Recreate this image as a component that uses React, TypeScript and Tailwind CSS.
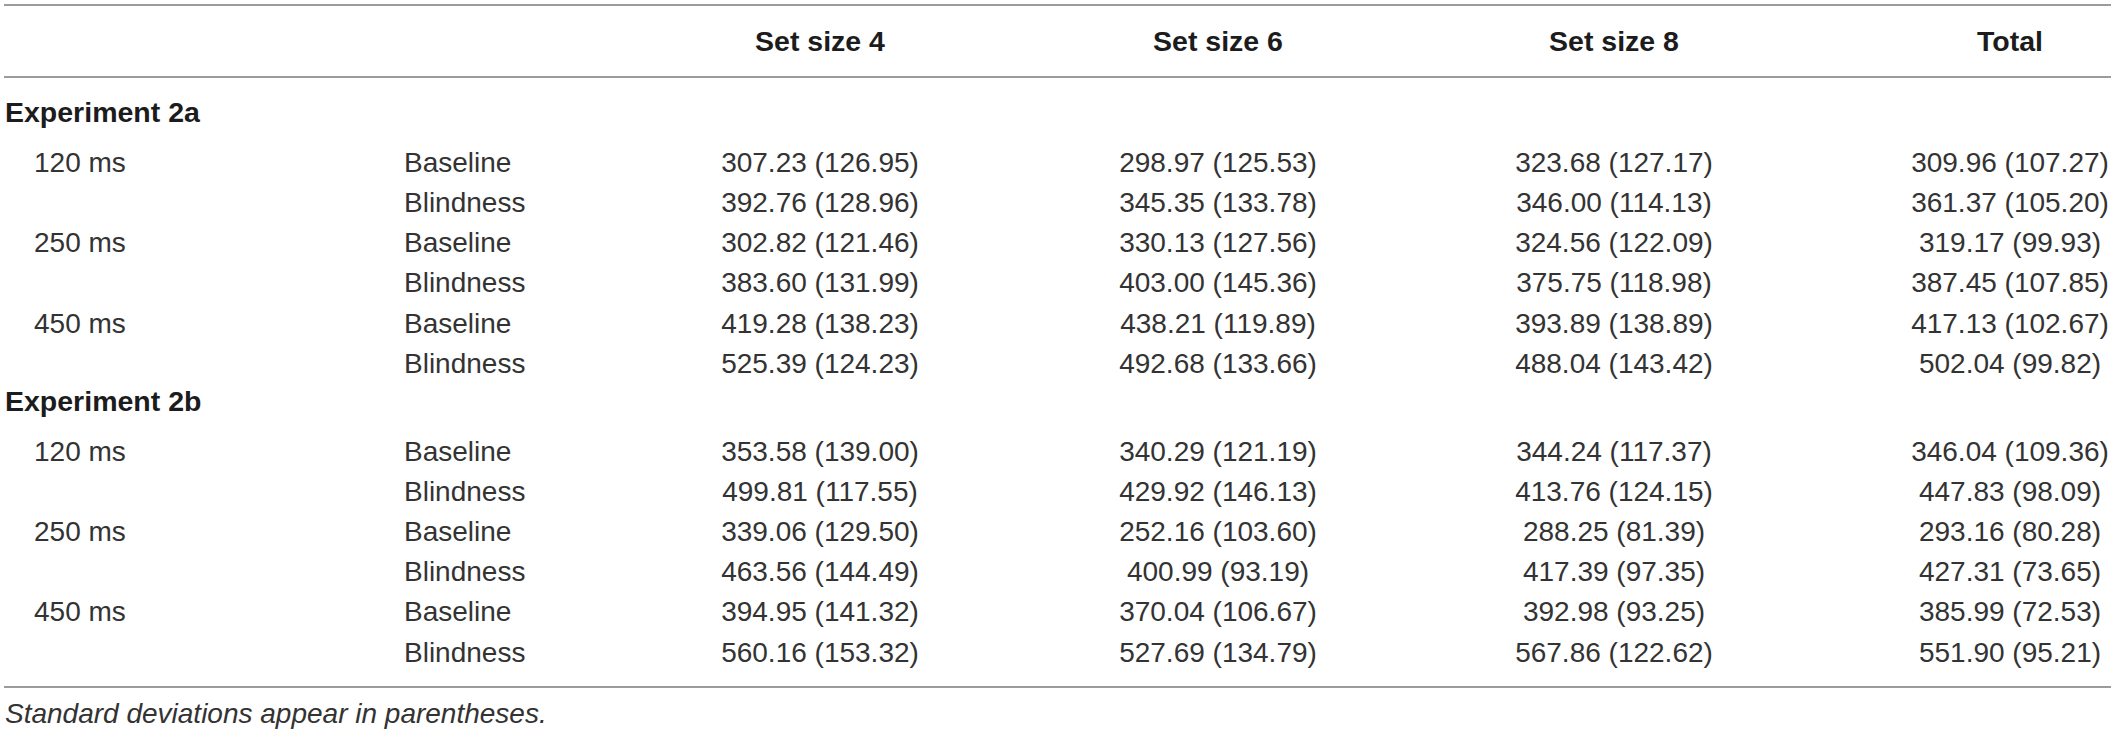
const groups = [
  {
    name: "Experiment 2a",
    rows: [
      ["120 ms", "Baseline", "307.23 (126.95)", "298.97 (125.53)", "323.68 (127.17)", "309.96 (107.27)"],
      ["", "Blindness", "392.76 (128.96)", "345.35 (133.78)", "346.00 (114.13)", "361.37 (105.20)"],
      ["250 ms", "Baseline", "302.82 (121.46)", "330.13 (127.56)", "324.56 (122.09)", "319.17 (99.93)"],
      ["", "Blindness", "383.60 (131.99)", "403.00 (145.36)", "375.75 (118.98)", "387.45 (107.85)"],
      ["450 ms", "Baseline", "419.28 (138.23)", "438.21 (119.89)", "393.89 (138.89)", "417.13 (102.67)"],
      ["", "Blindness", "525.39 (124.23)", "492.68 (133.66)", "488.04 (143.42)", "502.04 (99.82)"],
    ],
  },
  {
    name: "Experiment 2b",
    rows: [
      ["120 ms", "Baseline", "353.58 (139.00)", "340.29 (121.19)", "344.24 (117.37)", "346.04 (109.36)"],
      ["", "Blindness", "499.81 (117.55)", "429.92 (146.13)", "413.76 (124.15)", "447.83 (98.09)"],
      ["250 ms", "Baseline", "339.06 (129.50)", "252.16 (103.60)", "288.25 (81.39)", "293.16 (80.28)"],
      ["", "Blindness", "463.56 (144.49)", "400.99 (93.19)", "417.39 (97.35)", "427.31 (73.65)"],
      ["450 ms", "Baseline", "394.95 (141.32)", "370.04 (106.67)", "392.98 (93.25)", "385.99 (72.53)"],
      ["", "Blindness", "560.16 (153.32)", "527.69 (134.79)", "567.86 (122.62)", "551.90 (95.21)"],
    ],
  },
];

const rowGrid = "grid grid-cols-[400px_216px_400px_396px_396px_1fr]";

function DataRow({ cells }: { cells: string[] }) {
  const [time, cond, a, b, c, total] = cells;
  return (
    <div className={`${rowGrid} items-center h-[40.2px] text-[28px] text-[#333333]`}>
      <div className="pl-[30px]">{time}</div>
      <div>{cond}</div>
      <div className="text-center">{a}</div>
      <div className="text-center">{b}</div>
      <div className="text-center">{c}</div>
      <div className="pl-[97px] text-center">{total}</div>
    </div>
  );
}

export default function App() {
  return (
    <div className="w-[2117px] h-[737px] bg-white pt-[4px] pl-[4px] pr-[6px] font-['Liberation_Sans',Arial,sans-serif] overflow-hidden">
      <div className="border-t-2 border-b-2 border-[#9b9b9b]">
        <div className={`${rowGrid} items-center h-[70px] text-[28.5px] font-bold text-[#1c1c1c]`}>
          <div />
          <div />
          <div className="text-center">Set size 4</div>
          <div className="text-center">Set size 6</div>
          <div className="text-center">Set size 8</div>
          <div className="pl-[97px] text-center">Total</div>
        </div>
      </div>
      <div className="pt-[16px] pb-[14px] border-b-2 border-[#9b9b9b]">
        {groups.map((g) => (
          <div key={g.name}>
            <div className={`${rowGrid} items-start h-[47.8px]`}>
              <div className="col-span-2 pl-[1px] text-[28.5px] leading-[37.8px] font-bold text-[#1c1c1c]">
                {g.name}
              </div>
            </div>
            {g.rows.map((r, i) => (
              <DataRow key={i} cells={r} />
            ))}
          </div>
        ))}
      </div>
      <p className="pt-[12px] pl-[1px] text-[28px] leading-[28px] italic text-[#333333]">
        Standard deviations appear in parentheses.
      </p>
    </div>
  );
}
